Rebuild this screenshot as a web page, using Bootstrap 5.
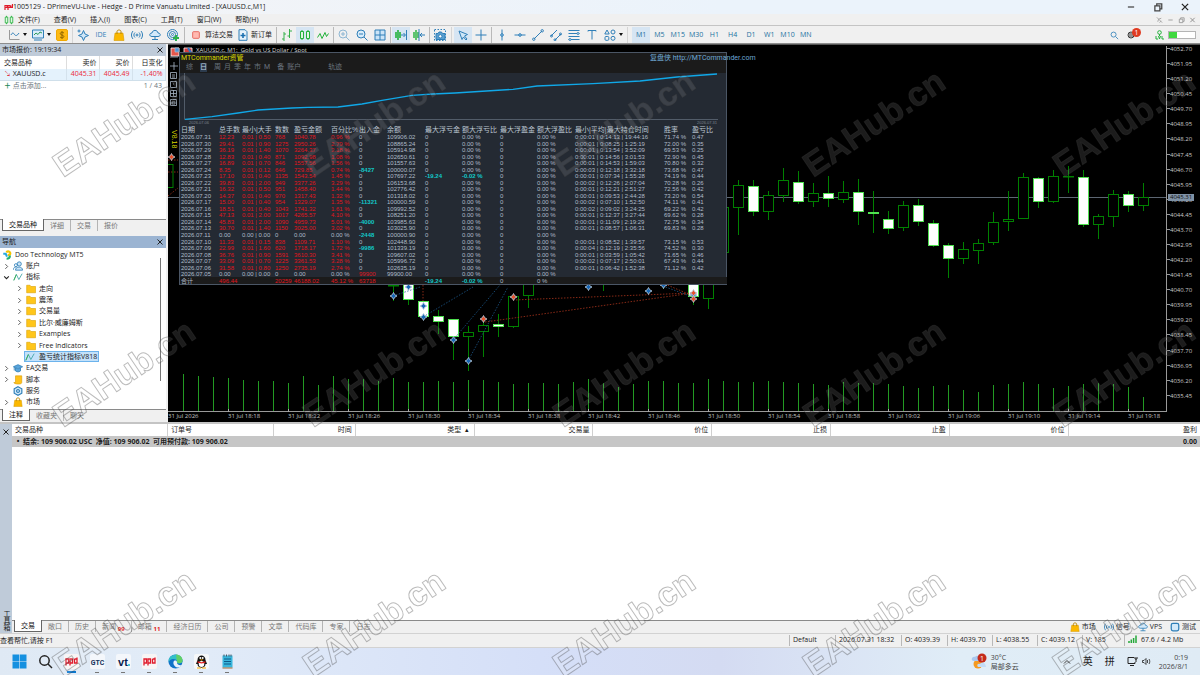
<!DOCTYPE html>
<html lang="zh-CN">
<head>
<meta charset="utf-8">
<meta name="viewport" content="width=device-width, initial-scale=1">
<title>1005129 - DPrimeVU-Live</title>
<link href="https://cdn.jsdelivr.net/npm/bootstrap@5.3.0/dist/css/bootstrap.min.css" rel="stylesheet">
<style>
:root{--ui:"Open Sans","Noto Sans CJK SC",sans-serif;--bl:#2f7fb8;--edge:#a0a0a0}
body{font:7px/10px var(--ui);color:#1c1c1c;background:#f0f0f0;overflow:hidden}
button,input{font:inherit;color:inherit;background:none;border:0;padding:0}
a{color:inherit;text-decoration:none}
svg{display:block;flex:none}
.ic{width:12px;height:12px;fill:none;stroke:var(--bl);stroke-width:1}
.ic-s{width:10px;height:10px}
.titlebar{height:14px;background:linear-gradient(90deg,#f4f4f6,#ebf3fb 60%)}
.titlebar,.toolbar,.menubar{flex:none}
.titletext{font-size:7px;font-family:"Open Sans",sans-serif}
.winbtns{gap:17px;padding-right:10px}
.menubar{height:12px;border-bottom:1px solid #c4c4c4}
.menubar nav{gap:14px}
.toolbar{height:18px;border-bottom:1px solid #8d8d8d;padding-left:5px}
.tb{width:18px;height:16px;display:flex;align-items:center;justify-content:center;flex:none}
.tb.wide{width:24px;gap:3px}
.tb.grow{width:auto;flex:1 1 0}
.tb.on{background:#d6e5f3}
.blue{color:var(--bl)}
.vsep{width:1px;height:16px;background:#b9b9b9;flex:none;margin:0 1px}
.vsep.far{margin:0 2px}
.caret{width:0;height:0;border:2px solid transparent;border-top:3px solid #111;border-bottom:0}
.frames{width:183px;color:#22719f;margin-left:2px}
.badge-dot{background:#e03a20;color:#fff;width:9px;height:9px;border-radius:50%;line-height:9px;text-align:center;top:-3px;left:5px}
.meter{width:28px;height:8px;border:1px solid #b4b4b4;background:#fff}
.meter i{display:block;width:8px;height:6px;background:#3fd83f}
.workspace{height:56vh;flex:none}
.dock{width:166px;flex:none}
.dockhead{height:12px;background:#bfcbd9;padding:0 2px}
.dockhead.live{background:#9bb4d2}
.quotes{table-layout:fixed;border-collapse:collapse;width:165px}
.quotes th{height:13px;font-weight:400;border-right:1px solid #ddd}
.quotes th,.quotes td{padding:0 2px;text-align:right;white-space:nowrap}
.quotes th:first-child,.quotes td:first-child{text-align:left;padding-left:4px}
.quotes tbody td{height:11px;background:#e4f2fc;color:#ec2a38;border-right:1px solid #d4e2ec;border-bottom:1px solid #cfdfea}
.quotes tbody td:first-child{color:#1c1c1c}
.tabrow{height:13px;border-top:1px solid #8a8a8a;color:#777;background:#f0f0f0;padding-left:2px}
.tabrow a{padding:0 6px;height:11px;border-right:1px solid #b4b4b4;line-height:11px;white-space:nowrap}
.tabrow a:last-of-type{border-right:0}
.tabrow a.on{background:#fff;color:#111;border:1px solid #666;border-top:0;height:12px;margin-top:-1px}
.tools{gap:2px}
.tree{height:161px;padding:1px 0 1px 2px;list-style:none;margin:0;width:156px}
.tree li{flex:1 1 0;display:flex;align-items:center;gap:3px}
.tree .l1{padding-left:1px}.tree .l2{padding-left:14px}
.tree .pick{background:#c3e1fa;border:1px solid #6cb3ec;height:11px;padding-right:1px;margin-left:8px}
.thumb{width:1px;height:123px;background:#777;margin:10px 5px 0 auto}
.chart{background:#000;margin-left:2px;border-top:1px solid #555;padding-top:1px;min-width:0}
.plotcol{flex:1 1 0;min-width:0}
.plot{height:calc(100% - 10px)}
.plot>svg{width:100%;height:100%}
.timeaxis{height:10px;color:#c4c4c4;font-size:6px;line-height:9px;white-space:nowrap}
.timeaxis span{flex:0 0 60px}
.priceaxis{width:33px;flex:none;color:#c8c8c8;font-size:6px;line-height:6px;padding-bottom:23px}
.priceaxis span::before{content:"";display:inline-block;width:3px;height:1px;background:#999;vertical-align:2px}
.lasttag{top:148px;left:1px;background:#7f92a6;color:#111;line-height:7px;padding:0 2px}
.charttitle{left:28px;top:1px;color:#d8d8d8;font-size:6px;line-height:9px;white-space:nowrap}
.ver{left:2px;top:85px;color:#d7d700;writing-mode:vertical-rl;font:7px/8px "Liberation Sans",sans-serif}
.board{left:11px;top:7px;width:548px;height:233px;background:#242a33;border:1px solid #4b5665;font-family:"Liberation Sans","Noto Sans CJK SC",sans-serif;color:#b0bcc9;overflow:visible}
.boardhead{height:20px;background:#1b1b1b;line-height:10px;white-space:nowrap;font-family:Roboto,"Noto Sans CJK SC",sans-serif}
.boardhead .who{color:#d9d900;padding-left:1px}
.boardhead .site{color:#6fa8d4;left:470px;top:0}
.boardhead .modes{color:#6a737d;padding-left:6px;gap:3px;line-height:9px}
.modes .on{background:#2c3b4d;color:#c3d3e6}
.stamp{font-size:4px;line-height:4px;color:#7c8590;padding:0 9px 1px}
.ledger{table-layout:fixed;border-collapse:collapse;width:546px;font-size:6px;line-height:6px;height:158px}
.ledger th:first-child,.ledger td:first-child{padding-left:1px}
.ledger th,.ledger td{padding:0;white-space:nowrap;font-weight:400;overflow:visible}
.ledger th{font-size:7px;line-height:8px;height:8px;color:#bcc6d1}
.ledger .neg{color:#e0161e}.ledger .out{color:#12c8c8;font-weight:700}
.ledger tr:last-child{background:#1b1b1b}
.ledger thead tr:last-child{background:none}
.toolbox{border-top:2px solid #c4c4c4;background:#fff}
.strip{width:12px;flex:none;background:#bfcbd9;padding-bottom:2px}
.strip b{writing-mode:vertical-rl;font-weight:400;line-height:10px}
.orders{table-layout:fixed;width:100%;border-collapse:collapse}
.orders th{height:12px;padding:0 3px;font-weight:400;text-align:right;border-right:1px solid #d0d0d0}
.orders th:last-child{border-right:0}
.orders td{height:11px;background:#c6c6c6;font-weight:700;padding:0 3px;white-space:pre;font-family:"Noto Sans","Noto Sans CJK SC",sans-serif}
.orders td:last-child{text-align:right}
.count{color:#e02020;font-weight:700;font-size:6px;position:relative;top:2px}
.status{height:15px;flex:none;border-top:1px solid #d2d2d2;border-bottom:1px solid #d2d2d2}
.status .cell{border-left:1px solid #b8b8b8;padding-left:3px;height:11px;white-space:nowrap}
.w42{width:42px}.w45{width:45px}.w46{width:46px}.w66{width:66px}.w76{width:76px}
.taskbar{height:27px;flex:none;background:linear-gradient(90deg,#dfe9f4 0,#e2ecf8 15%,#d5dff8 45%,#d4dbf2 60%,#e0edf7 80%,#dfebf5 100%)}
.apps{padding-left:6px}
.app{width:26px;height:27px;position:relative;display:flex;align-items:center;justify-content:center}
.app svg{width:15px;height:15px}
.app.run::after{content:"";position:absolute;bottom:2px;width:4px;height:1px;background:#777}
.app.now::after{width:9px;background:#0a78d0;height:2px}
.tray{font-size:7px;line-height:9px;color:#444}
.tray .big{font-size:10px;color:#222}
.marks{position:fixed;inset:0;width:100%;height:100%;pointer-events:none}
.marks text{font:700 34px "Liberation Sans",sans-serif;fill:rgba(255,255,255,.11);stroke:rgba(60,60,60,.35);stroke-width:1;stroke-linejoin:round}
</style>
<script src="https://cdn.jsdelivr.net/npm/bootstrap@5.3.0/dist/js/bootstrap.bundle.min.js"></script>
</head>
<body class="d-flex flex-column vh-100">
<svg width="0" height="0" class="position-absolute" aria-hidden="true">
<defs>
<symbol id="line" viewBox="0 0 12 12"><path d="M1.500 1v9.500h10" stroke="#999"/><path d="M3 6c1.500-3 2.500-2 3.500-.5S9 7 11 4"/></symbol>
<symbol id="screen" viewBox="0 0 12 12"><path d="M.5 1h11v8H.5zM2 11h8" fill="#d9ecfa"/><path d="M2 6l2-2 2 1.500L8 3l2 1" stroke="#2b9a5a"/></symbol>
<symbol id="coin" viewBox="0 0 12 12"><rect x=".5" y=".5" width="11" height="11" rx="1.500" fill="#fdb913" stroke="#f0a800"/><path d="M8 4C6.500 2.800 4 3.300 4.200 4.800S8 6 7.900 7.600 5 9 4 8M6 2v8" stroke="#8a6200" stroke-width=".9"/></symbol>
<symbol id="spark" viewBox="0 0 12 12"><path d="M6.500 1.500L8 5l3.500 1.500L8 8l-1.500 3.500L5 8 1.500 6.500 5 5zM2 .5v3M.5 2h3" fill="#cfe6f7"/></symbol>
<symbol id="bag" viewBox="0 0 12 12"><path d="M2 4h8l1 7.500H1z" fill="#fbb800" stroke="#d79a00" stroke-width=".6"/><path d="M4 5V2.500c0-2 4-2 4 0V5" stroke="#b98500"/></symbol>
<symbol id="signal" viewBox="0 0 12 12"><circle cx="6" cy="6" r="1"/><path d="M4 3.500c-1.500 1.500-1.500 3.500 0 5M8 3.500c1.500 1.500 1.500 3.500 0 5M2 2c-2 2.500-2 5.500 0 8M10 2c2 2.500 2 5.500 0 8"/></symbol>
<symbol id="cloud" viewBox="0 0 12 12"><path d="M3 7.500C0 7.500 0 4 3 4c.5-3.500 5.500-3.500 6 0 3 0 3 3.500 0 3.500z" fill="#d3e9f9"/><path d="M6 7.500v3M3 10.500h6"/></symbol>
<symbol id="target" viewBox="0 0 12 12"><circle cx="5.500" cy="5.500" r="5"/><circle cx="5.500" cy="5.500" r="3"/><circle cx="5.500" cy="5.500" r="1"/><path d="M9 6v6M6 9h6" stroke="#2eb04a" stroke-width="2"/></symbol>
<symbol id="stop" viewBox="0 0 12 12"><rect x="2" y="2" width="8" height="8" rx="1" fill="#ffb9b0" stroke="#e2574c"/></symbol>
<symbol id="order" viewBox="0 0 12 12"><path d="M2 .7h6l2 2v8.600H2z" fill="#e6f2fb"/><path d="M6 4v5M3.500 6.500h5" stroke-width="1.600" stroke="#1b6fb0"/></symbol>
<symbol id="bars" viewBox="0 0 12 12"><path d="M3 3v9M1 10h2M3 5h2M8.500 0v9M6.500 7h2M8.500 2h2.500" stroke="#35b14a"/></symbol>
<symbol id="candle" viewBox="0 0 12 12"><path d="M1.500 2.500h3v7h-3zM3 1v1.500M3 9.500V11M7.500 2.500h3v7h-3zM9 1v1.500M9 9.500V11" stroke="#22b13a" fill="#dff5e2"/></symbol>
<symbol id="zig" viewBox="0 0 12 12"><path d="M.5 8.500l2.500-4 2 5 3-6 1.500 4 2-3" stroke="#22b13a"/></symbol>
<symbol id="zin" viewBox="0 0 12 12"><circle cx="5" cy="5" r="4"/><path d="M8 8l3.500 3.500M3 5h4M5 3v4"/></symbol>
<symbol id="zout" viewBox="0 0 12 12"><circle cx="5" cy="5" r="4" fill="#d8ecfa"/><path d="M8 8l3.500 3.500M3 5h4"/></symbol>
<symbol id="tiles" viewBox="0 0 12 12"><path d="M1 1h10v10H1zM6 1v10M1 6h10" fill="#cbe4f7"/></symbol>
<symbol id="ascroll" viewBox="0 0 12 12"><path d="M1 3v6M3 1v10M5 3v6" stroke="#22b13a" stroke-width="1.600"/><path d="M6 6h4M8.500 4l2 2-2 2M11.500 1v10"/></symbol>
<symbol id="shift" viewBox="0 0 12 12"><path d="M1 3v6M3 1v10M5 3v6" stroke="#22b13a" stroke-width="1.400"/><path d="M7 6h5M9 4L7 6l2 2M6 0v12"/></symbol>
<symbol id="cam" viewBox="0 0 12 12"><path d="M.5.5h11v11H.5z" stroke-dasharray="1.500 1.500"/><path d="M2 4.500h2l1-1.500h2.500l1 1.500H11v6H2z" fill="#5a9fd0"/><circle cx="6.300" cy="7.300" r="1.700" fill="#fff"/></symbol>
<symbol id="arrow" viewBox="0 0 12 12"><path d="M2 2l8.500 3.500L7.500 7l2.500 3-1 1-2.500-3L5 10.500z" fill="#cfe6f7"/></symbol>
<symbol id="cross" viewBox="0 0 12 12"><path d="M6 .5v11M.5 6h11"/></symbol>
<symbol id="vl" viewBox="0 0 12 12"><path d="M6 .5v11"/><circle cx="6" cy="6" r="1.300" fill="#9ccbea"/></symbol>
<symbol id="hl" viewBox="0 0 12 12"><path d="M.5 6h11"/><circle cx="6" cy="6" r="1.300" fill="#9ccbea"/></symbol>
<symbol id="tl" viewBox="0 0 12 12"><path d="M2 10l8-8"/><circle cx="1.800" cy="10.200" r="1.200"/><circle cx="10.200" cy="1.800" r="1.200"/></symbol>
<symbol id="ch" viewBox="0 0 12 12"><path d="M1 7l6-6M5 11l6-6"/><circle cx="1.500" cy="7" r="1"/><circle cx="5" cy="10.800" r="1"/><circle cx="10.500" cy="5" r="1"/></symbol>
<symbol id="fib" viewBox="0 0 12 12"><path d="M.5 1.500h11M.5 4.500h11M.5 7.500h11M.5 10.500h11"/><circle cx="10" cy="4.500" r="1" fill="#fff"/><circle cx="2" cy="10.500" r="1" fill="#fff"/></symbol>
<symbol id="tt" viewBox="0 0 12 12"><path d="M2 2.500V1.500h8v1M6 1.500v9"/></symbol>
<symbol id="shp" viewBox="0 0 12 12"><path d="M3 1L.8 5h4.400z"/><circle cx="9" cy="3" r="2"/><rect x="1" y="7.500" width="3.800" height="3.800" rx="1"/><circle cx="9" cy="9.300" r="2"/></symbol>
<symbol id="mag" viewBox="0 0 12 12"><circle cx="5.500" cy="5.500" r="3"/><path d="M8 8l3 3"/></symbol>
<symbol id="folder" viewBox="0 0 12 12"><path d="M.8 1.500h4L6 3h5.500v7.500H.8z" fill="#ffc61a" stroke="#d9a000" stroke-width=".7"/></symbol>
<symbol id="people" viewBox="0 0 12 12"><circle cx="7.500" cy="3.500" r="2.500" fill="#cbe4f7"/><path d="M3 11c0-5 8.500-5 8.500 0z" fill="#cbe4f7"/><circle cx="3.500" cy="5" r="1.800"/><path d="M.5 10.500c0-3 2-3.500 3.500-3"/></symbol>
<symbol id="ind" viewBox="0 0 12 12"><path d="M1 10L4 3l3 6 4-7" stroke="#3aa0a0"/><path d="M1 10L4 3" stroke="#35b14a"/></symbol>
<symbol id="cap" viewBox="0 0 12 12"><path d="M.5 4.500L6 2l5.500 2.500L6 7zM3 6v3.500c2 1.500 4 1.500 6 0V6M1.500 5v4" fill="#5aa5dc"/></symbol>
<symbol id="script" viewBox="0 0 12 12"><path d="M3 1h7.500v8c0 3-9.500 2-9.500 0h2z" fill="#ffc21a" stroke="#d79a00" stroke-width=".7"/></symbol>
<symbol id="gear" viewBox="0 0 12 12"><path d="M6 .8l4.600 2.600v5.200L6 11.200 1.400 8.600V3.400z" fill="#d3e9f9" stroke-width="1.400"/><circle cx="6" cy="6" r="2"/><path d="M4 6h4"/></symbol>
<symbol id="chip" viewBox="0 0 12 12"><rect x="1.500" y="1.500" width="9" height="9" rx="2" fill="#d3e9f9" stroke-width="1.500"/></symbol>
<symbol id="doo" viewBox="0 0 12 12"><path d="M1.500 4.500h3L6 8" stroke="#27a8e0" stroke-width="2.500"/><path d="M5 2.500c3-2 6 0 4.500 3L7 6" stroke="#f5c400" stroke-width="2.500"/><path d="M5.500 10.500c3 0 4-1.500 4-4" stroke="#20b070" stroke-width="2.500"/></symbol>
<symbol id="chev" viewBox="0 0 6 6"><path d="M2 1l2 2-2 2" stroke="#555" stroke-width=".8"/></symbol>
<symbol id="chevd" viewBox="0 0 6 6"><path d="M1 2l2 2 2-2" stroke="#222" stroke-width=".9"/></symbol>
<symbol id="x" viewBox="0 0 8 8"><path d="M1.500 1.500l5 5m0-5l-5 5" stroke="#222"/></symbol>
<symbol id="min" viewBox="0 0 8 8"><path d="M1.500 4h5" stroke="#444"/></symbol>
<symbol id="rest" viewBox="0 0 8 8"><path d="M1.500 3h4v4h-4zM3 3V1.500h4v4H5.500" stroke="#444"/></symbol>
<symbol id="ppp" viewBox="0 0 15 15"><rect width="15" height="15" rx="2" fill="#f8f5f5" stroke="none"/><path d="M2 11.500V5h2.500v4H2M6 11.500V5h2.500v4H6M10.500 5v4H13V5h-2.500M13 3.500V9" stroke="#e01b2c" stroke-width="1.300" fill="none"/></symbol>
</defs></svg>

<header class="titlebar d-flex align-items-center ps-1">
 <svg width="9" height="6" viewBox="0 0 9 6"><path d="M1 6V1.500h2v2H1M4 6V1.500h2v2H4M8.500 0v3.500h-1.500v-2" fill="none" stroke="#e01b2c" stroke-width="1.200"/></svg>
 <span class="titletext">1005129 - DPrimeVU-Live - Hedge - D Prime Vanuatu Limited - [XAUUSD.c,M1]</span>
 <div class="ms-auto d-flex winbtns">
  <button aria-label="最小化"><svg class="ic ic-s"><use href="#min"/></svg></button>
  <button aria-label="还原"><svg class="ic ic-s"><use href="#rest"/></svg></button>
  <button aria-label="关闭"><svg class="ic ic-s"><use href="#x"/></svg></button>
 </div>
</header>
<div class="menubar d-flex align-items-center px-1">
 <svg class="ic ic-s me-1"><use href="#candle"/></svg>
 <nav class="d-flex text-nowrap"><a href="#">文件(F)</a><a href="#">查看(V)</a><a href="#">插入(I)</a><a href="#">图表(C)</a><a href="#">工具(T)</a><a href="#">窗口(W)</a><a href="#">帮助(H)</a></nav>
 <div class="ms-auto d-flex gap-1 opacity-50">
  <svg width="7" height="8" viewBox="0 0 8 8" stroke="#555" fill="none"><path d="M1 1l6 6M2 6l1-3 3-1M4 7l2-2"/></svg>
  <svg width="7" height="8"><use href="#min"/></svg><svg width="7" height="8" fill="none"><use href="#rest"/></svg><svg width="7" height="8"><use href="#x"/></svg>
 </div>
</div>
<div class="toolbar d-flex align-items-center">
 <button class="tb wide" aria-label="线图"><svg class="ic"><use href="#line"/></svg><i class="caret"></i></button>
 <button class="tb wide" aria-label="图表"><svg class="ic"><use href="#screen"/></svg><i class="caret"></i></button>
 <button class="tb" aria-label="货币"><svg class="ic"><use href="#coin"/></svg></button>
 <i class="vsep opacity-50"></i>
 <button class="tb" aria-label="助手"><svg class="ic"><use href="#spark"/></svg></button>
 <button class="tb blue">IDE</button>
 <button class="tb" aria-label="市场"><svg class="ic"><use href="#bag"/></svg></button>
 <button class="tb" aria-label="信号"><svg class="ic"><use href="#signal"/></svg></button>
 <button class="tb" aria-label="VPS"><svg class="ic"><use href="#cloud"/></svg></button>
 <button class="tb" aria-label="测试"><svg class="ic"><use href="#target"/></svg></button>
 <i class="vsep far"></i>
 <button class="d-flex align-items-center text-nowrap ms-1"><svg class="ic ic-s me-1"><use href="#stop"/></svg>算法交易</button>
 <button class="d-flex align-items-center text-nowrap ms-1 tools"><svg class="ic"><use href="#order"/></svg>新订单</button>
 <i class="vsep ms-1"></i>
 <button class="tb" aria-label="柱线"><svg class="ic"><use href="#bars"/></svg></button>
 <button class="tb on" aria-label="蜡烛"><svg class="ic"><use href="#candle"/></svg></button>
 <button class="tb" aria-label="折线"><svg class="ic"><use href="#zig"/></svg></button>
 <i class="vsep"></i>
 <button class="tb opacity-50" aria-label="放大"><svg class="ic"><use href="#zin"/></svg></button>
 <button class="tb" aria-label="缩小"><svg class="ic"><use href="#zout"/></svg></button>
 <button class="tb" aria-label="平铺"><svg class="ic"><use href="#tiles"/></svg></button>
 <i class="vsep"></i>
 <button class="tb on" aria-label="自动滚动"><svg class="ic"><use href="#ascroll"/></svg></button>
 <button class="tb" aria-label="平移"><svg class="ic"><use href="#shift"/></svg></button>
 <i class="vsep"></i>
 <button class="tb" aria-label="截图"><svg class="ic"><use href="#cam"/></svg></button>
 <i class="vsep far opacity-50"></i>
 <button class="tb on" aria-label="光标"><svg class="ic"><use href="#arrow"/></svg></button>
 <button class="tb" aria-label="十字线"><svg class="ic"><use href="#cross"/></svg></button>
 <i class="vsep"></i>
 <button class="tb" aria-label="垂直线"><svg class="ic"><use href="#vl"/></svg></button>
 <button class="tb" aria-label="水平线"><svg class="ic"><use href="#hl"/></svg></button>
 <button class="tb" aria-label="趋势线"><svg class="ic"><use href="#tl"/></svg></button>
 <button class="tb" aria-label="通道"><svg class="ic"><use href="#ch"/></svg></button>
 <button class="tb" aria-label="斐波那契"><svg class="ic"><use href="#fib"/></svg></button>
 <button class="tb" aria-label="文字"><svg class="ic"><use href="#tt"/></svg></button>
 <button class="tb wide" aria-label="图形"><svg class="ic"><use href="#shp"/></svg><i class="caret"></i></button>
 <i class="vsep far opacity-50"></i>
 <div class="frames d-flex"><button class="tb grow on">M1</button><button class="tb grow">M5</button><button class="tb grow">M15</button><button class="tb grow">M30</button><button class="tb grow">H1</button><button class="tb grow">H4</button><button class="tb grow">D1</button><button class="tb grow">W1</button><button class="tb grow">M10</button><button class="tb grow">MN</button></div>
 <div class="ms-auto d-flex align-items-center pe-1">
  <button class="me-2" aria-label="搜索"><svg class="ic ic-s"><use href="#mag"/></svg></button>
  <button class="position-relative me-3" aria-label="消息"><svg width="8" height="8" viewBox="0 0 8 8" fill="none" stroke="#333"><circle cx="4" cy="4" r="3"/><path d="M2 3h4M2 5h4"/></svg><span class="badge-dot position-absolute">1</span></button>
  <svg class="me-1 ms-1" width="9" height="10" viewBox="0 0 9 10" fill="none" stroke="#22b13a"><circle cx="4.500" cy="2.500" r="1.800"/><path d="M1 6v3h2M3.500 6l1 3 1-3M7 6v3h2M4.500 4v2"/></svg>
  <div class="meter"><i></i></div>
 </div>
</div>

<main class="workspace d-flex">
 <aside class="dock d-flex flex-column">
  <section class="flex-fill d-flex flex-column bg-white">
   <div class="dockhead d-flex align-items-center justify-content-between"><span>市场报价: 19:19:34</span><button aria-label="关闭"><svg width="8" height="8"><use href="#x"/></svg></button></div>
   <table class="quotes"><colgroup><col style="width:66px"><col style="width:33px"><col style="width:33px"><col style="width:33px"></colgroup>
    <thead><tr><th>交易品种</th><th>卖价</th><th>买价</th><th>日变化</th></tr></thead>
    <tbody><tr><td><span class="text-danger">↘</span> XAUUSD.c</td><td>4045.31</td><td>4045.49</td><td>-1.40%</td></tr></tbody></table>
   <div class="d-flex justify-content-between px-1 text-secondary"><span><b class="text-success">＋</b> 点击添加...</span><span>1 / 43</span></div>
   <div class="tabrow d-flex mt-auto"><a class="on" href="#">交易品种</a><a href="#">详细</a><a href="#">交易</a><a href="#">报价</a></div>
  </section>
  <section class="mt-1 bg-white">
   <div class="dockhead live d-flex align-items-center justify-content-between"><span>导航</span><button aria-label="关闭"><svg width="8" height="8"><use href="#x"/></svg></button></div>
   <div class="d-flex"><ul class="tree d-flex flex-column" id="tree"></ul><div class="thumb"></div></div>
   <div class="tabrow d-flex"><a class="on" href="#">注释</a><a href="#">收藏夹</a><a href="#">聊天</a></div>
  </section>
 </aside>
 <section class="chart flex-fill d-flex position-relative">
  <div class="plotcol">
   <div class="plot"><svg id="plot" viewBox="168 46 999 366" preserveAspectRatio="none"></svg></div>
   <div class="timeaxis d-flex" id="times"></div>
  </div>
  <div class="priceaxis position-relative d-flex flex-column justify-content-between" id="prices"></div>
  <div class="charttitle position-absolute">XAUUSD.c, M1:&nbsp; Gold vs US Dollar / Spot</div>
  <svg class="position-absolute top-0 start-0" width="28" height="62" viewBox="168 45 28 62" fill="none" stroke="#a9b8c8" stroke-width=".8"><path d="M171 48h8v8h-8z" fill="#e4574c" stroke="#fff"/><path d="M175 48h4v4h-4z" fill="#4d95d8"/><path d="M184 48h8v6h-8z" fill="#d33a3a" stroke="#fff"/><path d="M188 48l4 6" stroke="#2878c8" stroke-width="2"/><path d="M170 57h8M174 62v8M170 66h8M170.500 72.500h6v6h-6zM172 75h3M172 77h3M170.500 81.500h6v6h-6zM173 84h1M170.500 90.500h6v6h-6zM173.500 90v6M170.500 93.500h6M170.500 99.500h6v6h-6zM172 102h3v2h-3z"/></svg>
  <div class="ver position-absolute">V8.18</div>
  <article class="board position-absolute">
   <div class="boardhead position-relative"><span class="who">MTCommander资管</span><a class="site position-absolute" href="#">复盘侠 http://MTCommander.com</a>
    <div class="modes d-flex"><span>综</span><span class="on mx-1">日</span><span>周</span><span>月</span><span>季</span><span>年</span><span>市</span><span>M</span><span class="ms-1">备</span><span>账户</span><span class="ms-4">轨迹</span></div></div>
   <svg width="546" height="48" viewBox="180 73 546 48" fill="none"><path d="M184.500 73v46.500H718" stroke="#525c69"/><path stroke="#10a8e8" stroke-width="1.300" d="M185 119.300L212 116.700 238 113 258 110 292 108 308 107.300 338 107 362 104 382 100.300 412 95.300 433 94 455 93 513 89.300 537 86 593 83.700 640 81 677 77 717 74"/></svg>
   <div class="stamp d-flex justify-content-between"><span>2026.07.06</span><span>2026.07.31</span></div>
   <table class="ledger"><colgroup id="cols"></colgroup><thead><tr><th>日期</th><th>总手数</th><th>最小|大手</th><th>数数</th><th>盈亏金额</th><th>百分比%</th><th>出入金</th><th>余额</th><th>最大浮亏金</th><th>额大浮亏比</th><th>最大浮盈金</th><th>额大浮盈比</th><th>最小|平均|最大持仓时间</th><th>胜率</th><th>盈亏比</th></tr></thead><tbody id="rows"></tbody></table>
  </article>
 </section>
</main>

<section class="toolbox flex-fill d-flex">
 <div class="strip d-flex flex-column justify-content-between align-items-center"><button class="pt-1" aria-label="关闭"><svg width="8" height="8"><use href="#x"/></svg></button><b>工具箱</b></div>
 <div class="flex-fill d-flex flex-column">
  <table class="orders"><colgroup><col style="width:13.100%"><col style="width:8.900%"><col style="width:6.900%"><col style="width:10%"><col style="width:10%"><col style="width:10%"><col style="width:10%"><col style="width:10%"><col style="width:10%"><col></colgroup>
   <thead><tr><th class="text-start">交易品种</th><th class="text-start">订单号</th><th>时间</th><th>类型 &nbsp;▴&nbsp;</th><th>交易量</th><th>价位</th><th>止损</th><th>止盈</th><th>价位</th><th>盈利</th></tr></thead>
   <tbody><tr><td colspan="9"> •  结余: 109 906.02 USC  净值: 109 906.02  可用预付款: 109 906.02</td><td>0.00</td></tr></tbody></table>
  <div class="tabrow d-flex mt-auto"><a class="on" href="#">交易</a><a href="#">敞口</a><a href="#">历史</a><a href="#">新闻 <span class="count">99</span></a><a href="#">邮箱 <span class="count">11</span></a><a href="#">经济日历</a><a href="#">公司</a><a href="#">预警</a><a href="#">文章</a><a href="#">代码库</a><a href="#">专家</a><a href="#">日志</a>
   <div class="ms-auto d-flex gap-2 text-dark align-items-center pe-1"><span class="d-flex tools"><svg class="ic ic-s"><use href="#bag"/></svg>市场</span><span class="d-flex tools"><svg class="ic ic-s"><use href="#signal"/></svg>信号</span><span class="d-flex tools"><svg class="ic ic-s"><use href="#cloud"/></svg>VPS</span><span class="d-flex tools"><svg class="ic ic-s"><use href="#chip"/></svg>测试</span></div></div>
 </div>
</section>
<footer class="status d-flex align-items-center"><span class="me-auto">查看帮忙,请按 F1</span><span class="cell w46">Default</span><span class="cell w66">2026.07.31 18:32</span><span class="cell w46">O: 4039.39</span><span class="cell w45">H: 4039.70</span><span class="cell w45">L: 4038.55</span><span class="cell w45">C: 4039.12</span><span class="cell w42">V: 185</span><span class="cell w76 d-flex gap-1"><svg width="9" height="8" viewBox="0 0 9 8" stroke="#25a83a" stroke-width="1.500"><path d="M1 8V6M3.300 8V4.500M5.600 8V3M8 8V.5"/></svg>67.6 / 4.2 Mb</span></footer>
<nav class="taskbar d-flex align-items-center">
 <div class="d-flex apps">
 <button class="app" aria-label="开始"><svg viewBox="0 0 15 15"><path d="M.5.5h6.700v6.700H.5zM7.800.5h6.700v6.700H7.800zM.5 7.800h6.700v6.700H.5zM7.800 7.800h6.700v6.700H7.800z" fill="#1590e0"/></svg></button>
 <button class="app" aria-label="搜索"><svg viewBox="0 0 15 15" fill="none" stroke="#222" stroke-width="1.500"><circle cx="6.500" cy="6.500" r="4.700"/><path d="M10 10l4 4"/></svg></button>
 <button class="app run now" aria-label="DPrime"><svg><use href="#ppp"/></svg></button>
 <button class="app run" aria-label="GTC"><svg viewBox="0 0 15 15"><rect width="15" height="15" rx="2" fill="#f4f7fb"/><text x="7.500" y="10.500" text-anchor="middle" font-family="Roboto" font-weight="700" font-size="7" fill="#17335c">GTC</text></svg></button>
 <button class="app run" aria-label="vt"><svg viewBox="0 0 15 15"><rect width="15" height="15" rx="2" fill="#f4f7fb"/><text x="7" y="11.500" text-anchor="middle" font-family="Liberation Sans" font-weight="700" font-size="11" fill="#0c1d4d">vt</text><circle cx="13" cy="11" r="1" fill="#20b8c8"/></svg></button>
 <button class="app run" aria-label="DPrime"><svg><use href="#ppp"/></svg></button>
 <button class="app run" aria-label="Edge"><svg viewBox="0 0 15 15"><circle cx="7.500" cy="7.500" r="7" fill="#1173c8"/><path d="M.7 6C2-1 14-1 14.500 6.500 14.500 10 10 10 9 8.500 10 6 7 4.500 4.500 5S1 7 .7 9z" fill="#32c0c8"/><path d="M8 .5c5 0 7 4 6.400 7-.6 2-4 2-5.400 1" fill="#62cf66"/><path d="M9 8.500C9 6 6 6 5.500 8s1 5 4 5.500 4-2 4.300-2.500c-2 .6-4.800 0-4.800-2.500z" fill="#eaf3fb"/></svg></button>
 <button class="app run" aria-label="QQ"><svg viewBox="0 0 15 15"><rect width="15" height="15" rx="2" fill="#f6f8fa"/><path d="M3.500 6C3.500 0 11.500 0 11.500 6l1.500 4-1.500 0c0 5-8 5-8 0L2 10z" fill="#111"/><ellipse cx="7.500" cy="10" rx="2.800" ry="3" fill="#fff"/><path d="M3.500 7c2 1.500 6 1.500 8 0v1.500c-2 1.200-6 1.200-8 0z" fill="#e02020"/><circle cx="6.300" cy="4" r="1" fill="#fff"/><circle cx="8.700" cy="4" r="1" fill="#fff"/><path d="M5.500 5.500h4l-2 1.200zM3 13.500h4v1H3zM8 13.500h4v1H8z" fill="#f5a800"/></svg></button>
 <button class="app run" aria-label="记事本"><svg viewBox="0 0 15 15"><path d="M2.500 1.500h10v12h-10z" fill="#38b6dc"/><path d="M4 5h7M4 7.500h7M4 10h7" stroke="#0c5a88"/><path d="M4 .5v2M6.500.5v2M9 .5v2M11 .5v2" stroke="#456"/><path d="M2.500 14h10" stroke="#a76a30"/></svg></button>
 </div>
 <div class="tray ms-auto d-flex align-items-center">
  <svg class="me-1" width="16" height="17" viewBox="0 0 16 17"><circle cx="7" cy="11" r="4.500" fill="#f59a20"/><path d="M3 8c-4 0-2-5 1-4 2-3 6 0 5 4z" fill="#a9c8ef"/><path d="M7 14c-2-3 1-4 2-3 2-3 6-1 6 3z" fill="#c4dcf6"/><circle cx="11" cy="5" r="4.500" fill="#c42b1c"/><text x="11" y="7.500" font-size="7" text-anchor="middle" fill="#fff">1</text></svg>
  <div class="me-4 pe-3"><div>30°C</div><div class="text-nowrap">局部多云</div></div>
  <div class="d-flex align-items-center gap-2 ms-1">
  <svg width="8" height="8" viewBox="0 0 8 8" fill="none" stroke="#222"><path d="M1 5.500l3-3 3 3"/></svg>
  <span class="big ms-1">英</span><span class="big ms-1 me-1">拼</span></div>
  <div class="d-flex align-items-center gap-1 ms-2">
  <svg width="11" height="11" viewBox="0 0 11 11" fill="none" stroke="#222"><path d="M7 1.500H1v6h7V6M3 9.500h4M8 1v2h2V1M9 3v3"/></svg>
  <svg width="9" height="9" viewBox="0 0 9 9" fill="none" stroke="#222" stroke-width=".8"><path d="M.5 3.500v2H2l2 2v-6l-2 2zM5.500 3v3M7 2c1 1.500 1 3.500 0 5"/></svg></div>
  <div class="text-end ms-2 me-1 pe-2"><div>0:19</div><div>2026/8/1</div></div>
 </div>
</nav>
<svg class="marks" id="marks" aria-hidden="true"></svg>

<script>
const $ = id => document.getElementById(id);

// navigator tree: level, icon, label, open state
const tree = [[0,'doo','Doo Technology MT5'],[1,'people','账户'],[1,'ind','指标','open'],[2,'folder','走向'],[2,'folder','震荡'],[2,'folder','交易量'],[2,'folder','比尔·威廉姆斯'],[2,'folder','Examples'],[2,'folder','Free Indicators'],[2,'ind','盈亏统计指标V818','pick'],[1,'cap','EA交易'],[1,'script','脚本'],[1,'gear','服务','leaf'],[1,'bag','市场']];
$('tree').innerHTML = tree.map(([l,i,t,s]) => {
  const icon = `<svg class="ic ic-s"><use href="#${i}"/></svg>`;
  if (s === 'pick') return `<li class="l2"><span class="pick d-flex align-items-center gap-1">${icon}${t}</span></li>`;
  const chev = l ? `<svg class="ic" style="width:7px;height:7px">${s === 'leaf' ? '' : `<use href="#${s === 'open' ? 'chevd' : 'chev'}"/>`}</svg>` : '';
  return `<li class="l${l}">${chev}${icon}<span>${t}</span></li>`;
}).join('');

// statement rows
const rows = `2026.07.31;12.23;0.01 | 0.50;768;1040.78;0.96 %;0;109906.02;0:00:01 | 0:14:13 | 19:44:16;71.74 %;0.47
2026.07.30;29.41;0.01 | 0.90;1275;2950.26;2.79 %;0;108865.24;0:00:01 | 0:08:25 | 1:25:19;72.00 %;0.35
2026.07.29;36.19;0.01 | 1.40;1070;3264.37;3.18 %;0;105914.98;0:00:01 | 0:13:54 | 3:52:09;69.53 %;0.25
2026.07.28;12.83;0.01 | 0.40;871;1092.98;1.08 %;0;102650.61;0:00:01 | 0:14:56 | 3:01:53;72.90 %;0.45
2026.07.27;16.89;0.01 | 0.70;846;1557.56;1.56 %;0;101557.63;0:00:01 | 0:14:53 | 1:59:03;70.80 %;0.32
2026.07.24;8.35;0.01 | 0.12;646;729.85;0.74 %;-8427;100000.07;0:00:03 | 0:12:18 | 3:32:18;73.68 %;0.47
2026.07.23;17.10;0.01 | 0.40;1135;1543.54;1.45 %;0;107697.22;0:00:01 | 0:07:34 | 1:55:28;74.19 %;0.44
2026.07.22;39.83;0.01 | 2.00;949;3377.26;3.29 %;0;106153.68;0:00:02 | 0:12:26 | 2:07:04;70.28 %;0.26
2026.07.21;16.32;0.01 | 0.50;951;1458.40;1.44 %;0;102776.42;0:00:01 | 0:12:21 | 2:51:27;72.56 %;0.42
2026.07.20;14.37;0.01 | 0.40;970;1317.43;1.32 %;0;101318.02;0:00:01 | 0:09:53 | 2:44:28;73.20 %;0.54
2026.07.17;15.00;0.01 | 0.40;954;1329.07;1.35 %;-11321;100000.59;0:00:02 | 0:07:10 | 1:52:50;74.11 %;0.41
2026.07.16;18.51;0.01 | 0.40;1043;1741.32;1.61 %;0;109992.52;0:00:02 | 0:09:02 | 3:24:25;69.22 %;0.42
2026.07.15;47.13;0.01 | 2.00;1017;4265.57;4.10 %;0;108251.20;0:00:01 | 0:12:37 | 3:27:44;69.62 %;0.28
2026.07.14;45.83;0.01 | 2.00;1090;4959.73;5.01 %;-4000;103985.63;0:00:01 | 0:11:09 | 2:19:29;72.75 %;0.34
2026.07.13;30.70;0.01 | 1.40;1150;3025.00;3.02 %;0;103025.90;0:00:01 | 0:08:57 | 1:06:31;69.83 %;0.28
2026.07.11;0.00;0.00 | 0.00;0;0.00;0.00 %;-2448;100000.90;;;
2026.07.10;11.33;0.01 | 0.15;838;1109.71;1.10 %;0;102448.90;0:00:01 | 0:08:52 | 1:39:57;73.15 %;0.53
2026.07.09;22.99;0.01 | 1.60;620;1718.17;1.72 %;-9986;101339.19;0:00:04 | 0:12:19 | 2:35:56;74.52 %;0.30
2026.07.08;36.76;0.01 | 0.90;1591;3610.30;3.41 %;0;109607.02;0:00:01 | 0:03:59 | 1:05:42;71.65 %;0.46
2026.07.07;33.09;0.01 | 0.70;1225;3361.53;3.28 %;0;105996.72;0:00:02 | 0:07:17 | 2:50:01;67.43 %;0.44
2026.07.06;31.58;0.01 | 0.80;1250;2735.19;2.74 %;0;102635.19;0:00:01 | 0:06:42 | 1:52:38;71.12 %;0.42
2026.07.05;0.00;0.00 | 0.00;0;0.00;0.00 %;99900;99900.00;;;
合计;496.44;;20259;46188.02;45.12 %;63718;;;;`.split('\n').map(r => r.split(';'));
$('cols').innerHTML = [39,23,33,19,37,28,28,38,37,38,37,38,89,28,35].map(w => `<col style="width:${w}px">`).join('');
$('rows').innerHTML = rows.map(r => {
  const dd = r[0] === '2026.07.23' || r[0] === '合计', flat = r[1] === '0.00';
  const c = [...r.slice(0,8), dd ? '-19.24' : '0', dd ? '-0.02 %' : '0.00 %', '0', r[0] === '合计' ? '0 %' : '0.00 %', ...r.slice(8)];
  return '<tr>' + c.slice(0,15).map((v,i) => {
    let k = '';
    if (i > 0 && i < 6 && !flat) k = 'neg';
    if (i === 6 && +v > 0) k = 'neg';
    if (i > 5 && v[0] === '-') k = 'out';
    return `<td class="${k}">${v}</td>`;
  }).join('') + '</tr>';
}).join('');

// axes
const tm = m => `31 Jul ${Math.floor(m/60)}:${String(m%60).padStart(2,'0')}`;
$('times').innerHTML = Array.from({length:17}, (_,i) => `<span>${i ? tm(18*60+14+4*i) : '31 Jul 2026'}</span>`).join('');
$('prices').innerHTML = Array.from({length:24}, (_,i) => `<span>${(4052.7-.75*i).toFixed(2)}</span>`).join('') + '<div class="lasttag position-absolute">4045.31</div>';

// candles: x, high, low, body top, body bottom, filled
const C = [[393,285,301,285,285,0],[408,285,305,280,300,1],[423,301,319,301,317,1],[438,310,334,316,322,1],[453,319,360,319,337,1],[468,326,371,332,337,0],[483,320,357,325,332,0],[498,314,337,324,327,1],[513,295,328,296,327,0],[528,280,308,280,296,0],[603,280,291,270,280,0],[663,280,289,270,280,0],[693,280,305,280,297,1],[708,280,309,280,299,0],[723,210,250,207,253,0],
[738,180,235,185,208,0],[753,180,216,186,212,1],[768,191,220,195,212,0],[783,168,202,180,196,0],[798,171,204,182,202,1],[813,183,207,193,202,0],[828,176,207,193,199,1],[843,181,203,192,200,0],[858,179,225,192,212,1],[873,191,233,212,214,1],[888,211,234,219,229,1],[903,201,231,205,228,0],[918,199,226,205,222,1],[933,220,247,223,246,1],[948,243,278,245,259,1],[963,242,264,249,259,0],[978,239,264,243,251,0],[993,212,245,222,243,0],[1008,191,231,219,222,0],[1023,173,219,177,219,0],[1038,177,208,178,202,1],[1053,170,203,176,202,0],[1068,166,193,176,177,0],[1083,170,227,177,225,1],[1098,214,239,216,225,0],[1113,190,227,194,217,0],[1128,191,212,194,206,1],[1143,183,211,197,206,0]];
const V = [374,376,377,378,380,381,381,383,376,385,376,379,379,381,378,382,382,381,382,380,380,382,384,383,383,384,382,379,383,387,384,381,381,383,383,379,381,382,382,381,382,383,384,385,382,383,383,384,386,388,386,385,390,392,385,384,382,384,388,386,384,383,384,387,397];
let s = '<path d="M168 197.500h999" stroke="#5c6672"/><path d="M168 411.500h999M1166.500 46v366" stroke="#999"/>';
V.forEach((y,i) => s += `<path d="M${183.5+i*15} ${y}V411" stroke="#229a22"/>`);
for (let i=1;i<17;i++) s += `<path d="M${168.5+i*60} 409v4" stroke="#aaa"/>`;
C.forEach(([x,h,l,t,b,f]) => {
  s += `<path d="M${x+.5} ${h}V${t}M${x+.5} ${b}V${l}" stroke="#008000"/>`;
  s += `<rect x="${x-4.5}" y="${t+.5}" width="10" height="${Math.max(b-t-1,.5)}" fill="${f ? '#fff' : '#000'}" stroke="${f ? '#4fe04f' : '#008000'}"/>`;
});
s += '<g stroke-dasharray="1.500 1.500" fill="none" stroke-width=".8"><path stroke="#a8341c" d="M513 300L693 293M485 322L693 293M423 285v16M665 284l28 12M168 160h10M168 172h10M168 196l10-8"/><path stroke="#1c588c" d="M423 317L473 287M453 340L500 285M468 361L508 287M393 296L420 287M660 285l30 11"/></g><rect x="160" y="164.500" width="13" height="23" fill="none" stroke="#008000"/>';
const mark = (x,y,c) => s += `<path d="M${x-3.5} ${y}l2.200-1.200 1.300-2.300 1.300 2.300 2.200 1.200-2.200 1.200-1.300 2.300-1.300-2.300z" fill="${c}" stroke="#b9cbdc" stroke-width=".8"/>`;
[[393,296],[408,287],[423,306],[423,317],[453,340],[468,361],[588,287],[648,291],[663,285],[693,295]].forEach(([x,y]) => mark(x+.5,y,'#1565b5'));
[[483,319],[513,297],[693,293],[693,299],[171,157]].forEach(([x,y]) => mark(x+.5,y,'#e8502c'));
$('plot').innerHTML = s;

// page watermark grid
let m = '';
for (let y=178;y<900;y+=250) for (let x=63;x<2600;x+=250) m += `<text transform="translate(${x} ${y}) rotate(-34)">EAHub.cn</text>`;
$('marks').innerHTML = m;
</script>
</body>
</html>
